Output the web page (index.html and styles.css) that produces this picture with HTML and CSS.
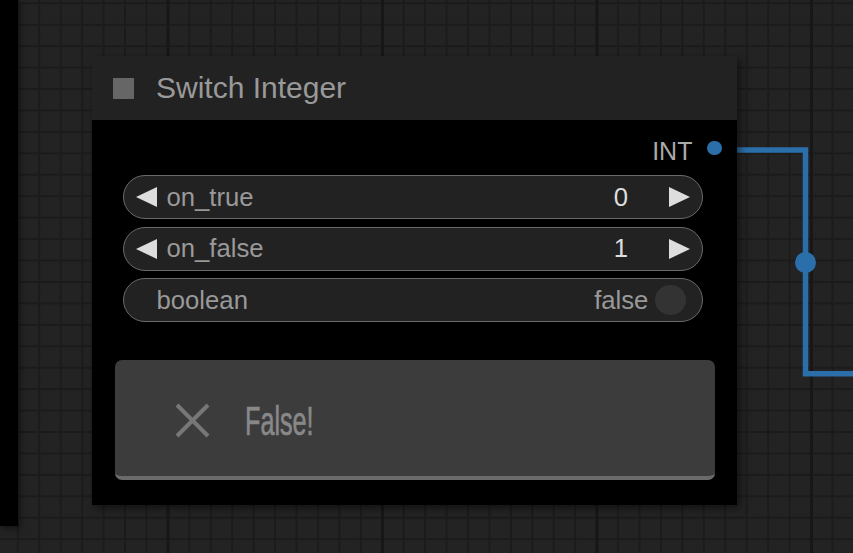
FILE: index.html
```html
<!DOCTYPE html>
<html>
<head>
<meta charset="utf-8">
<link rel="stylesheet" href="styles.css">
</head>
<body>
<div class="canvas">
  <div class="sidepanel"></div>
  <svg class="links" width="853" height="553" viewBox="0 0 853 553">
    <path d="M715 150 H805.5 V373.7 H860" fill="none" stroke="#2b6faa" stroke-width="5.5"/>
    <circle cx="805.5" cy="262.5" r="10.5" fill="#2b6faa"/>
  </svg>
  <div class="node">
    <div class="node-title">
      <span class="title-box"></span>
      <span class="title-text">Switch Integer</span>
    </div>
    <div class="node-body">
      <div class="output">
        <span class="output-label">INT</span>
        <span class="output-dot"></span>
      </div>
      <div class="widgets">
        <div class="widget">
          <svg class="arrow" width="21" height="20" viewBox="0 0 21 20"><polygon points="21,0 21,20 0,10" fill="#ddd"/></svg>
          <span class="w-label">on_true</span>
          <span class="w-value">0</span>
          <svg class="arrow arrow-r" width="21" height="20" viewBox="0 0 21 20"><polygon points="0,0 0,20 21,10" fill="#ddd"/></svg>
        </div>
        <div class="widget">
          <svg class="arrow" width="21" height="20" viewBox="0 0 21 20"><polygon points="21,0 21,20 0,10" fill="#ddd"/></svg>
          <span class="w-label">on_false</span>
          <span class="w-value">1</span>
          <svg class="arrow arrow-r" width="21" height="20" viewBox="0 0 21 20"><polygon points="0,0 0,20 21,10" fill="#ddd"/></svg>
        </div>
        <div class="widget toggle">
          <span class="t-label">boolean</span>
          <span class="t-value">false</span>
          <span class="t-knob"></span>
        </div>
      </div>
      <div class="button">
        <svg class="x-icon" width="35" height="35" viewBox="0 0 35 35"><path d="M2 2 L33 33 M33 2 L2 33" stroke="#777" stroke-width="4" fill="none"/></svg>
        <span class="button-text">False!</span>
      </div>
    </div>
  </div>
</div>
</body>
</html>
```
FILE: styles.css
```css
html, body {
  margin: 0;
  padding: 0;
}
body {
  width: 853px;
  height: 553px;
  overflow: hidden;
  font-family: "Liberation Sans", Arial, sans-serif;
}
.canvas {
  position: relative;
  width: 853px;
  height: 553px;
  background:
    linear-gradient(to right, #171717 3px, transparent 3px) 166.5px 0 / 214.5px 100%,
    linear-gradient(to right, #1b1b1b 2px, transparent 2px) 16.85px 0 / 21.45px 100%,
    linear-gradient(to bottom, #1b1b1b 2px, transparent 2px) 0 2.3px / 100% 21.45px,
    #232323;
}
.sidepanel {
  position: absolute;
  left: 0;
  top: 0;
  width: 18px;
  height: 526px;
  background: #000;
  box-shadow: 2px 2px 6px rgba(0,0,0,0.5);
}
.links {
  position: absolute;
  left: 0;
  top: 0;
}
.node {
  position: absolute;
  left: 92px;
  top: 56px;
  width: 645px;
  height: 449px;
  display: flex;
  flex-direction: column;
  box-shadow: 3px 3px 8px rgba(0,0,0,0.5);
}
.node-title {
  height: 64px;
  background: #222;
  display: flex;
  align-items: center;
  padding-left: 21px;
  gap: 22px;
  flex: none;
}
.title-box {
  width: 21px;
  height: 21px;
  background: #666;
}
.title-text {
  font-size: 30px;
  color: #999;
  white-space: nowrap;
}
.node-body {
  flex: 1;
  background: #000;
  display: flex;
  flex-direction: column;
  padding: 10px 0 25px 0;
}
.output {
  height: 40px;
  display: flex;
  align-items: center;
  justify-content: flex-end;
  padding-right: 15px;
  gap: 15px;
}
.output-label {
  font-size: 25px;
  color: #aaa;
  margin-top: 2px;
}
.output-dot {
  width: 14.6px;
  height: 14.6px;
  border-radius: 50%;
  background: #2b6faa;
  margin-bottom: 4px;
}
.widgets {
  margin: 5px 34px 0 31px;
  display: flex;
  flex-direction: column;
  gap: 7.5px;
}
.widget {
  box-sizing: border-box;
  height: 44px;
  border: 1.5px solid #6a6a6a;
  border-radius: 22px;
  background: #222;
  display: flex;
  align-items: center;
  padding: 0 12px;
  font-size: 25.7px;
}
.arrow {
  flex: none;
  display: block;
}
.w-label {
  margin-left: 9.5px;
  color: #999;
  flex: 1;
}
.w-value {
  color: #ddd;
  margin-right: 41px;
}
.toggle {
  padding: 0 16px 0 32.5px;
}
.t-label {
  color: #999;
  flex: 1;
}
.t-value {
  color: #999;
  margin-right: 7px;
}
.t-knob {
  width: 30.6px;
  height: 30.6px;
  border-radius: 50%;
  background: #333;
}
.button {
  margin: auto 22px 0 23px;
  box-sizing: border-box;
  height: 120px;
  background: #3c3c3c;
  border-bottom: 4px solid #6a6a6a;
  border-radius: 7px;
  display: flex;
  align-items: center;
  padding: 4px 0 0 60px;
  gap: 35px;
}
.x-icon {
  display: block;
  flex: none;
}
.button-text {
  font-family: "Liberation Sans", Arial, sans-serif;
  font-weight: normal;
  font-size: 40px;
  color: #888;
  -webkit-text-stroke: 0.7px #888;
  display: inline-block;
  transform: scaleX(0.63);
  transform-origin: left center;
  margin-top: 3px;
}
```
